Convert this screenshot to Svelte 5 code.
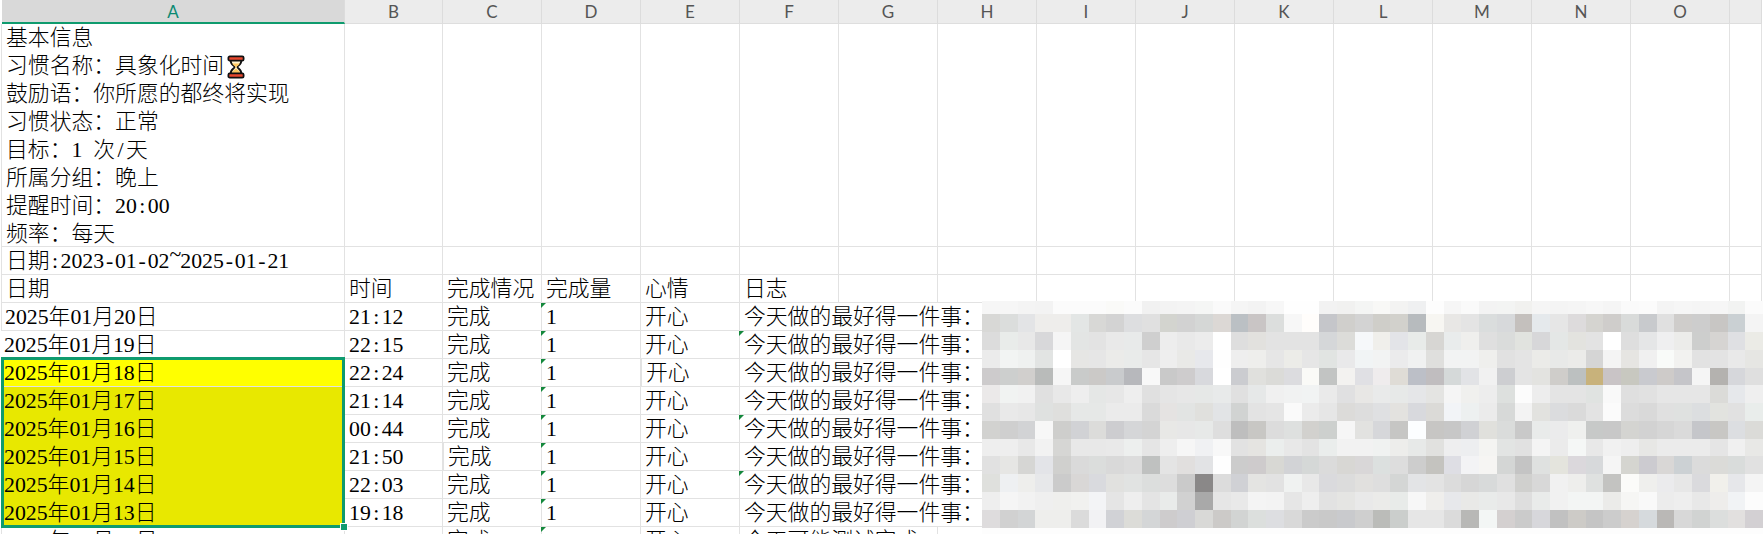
<script lang="ts">
  const cols = ["A", "B", "C", "D", "E", "F", "G", "H", "I", "J", "K", "L", "M", "N", "O", ""];
  const spare = cols.slice(1);

  const info = ["基本信息", "习惯名称：具象化时间", "鼓励语：你所愿的都终将实现", "习惯状态：正常", "目标：1 次/天", "所属分组：晚上", "提醒时间：20:00", "频率：每天"];

  const rows = [
    { date: "2025年01月20日", time: "21:12" },
    { date: "2025年01月19日", time: "22:15", note: true },
    { date: "2025年01月18日", time: "22:24", fill: "first" },
    { date: "2025年01月17日", time: "21:14", fill: "rest" },
    { date: "2025年01月16日", time: "00:44", fill: "rest", note: true },
    { date: "2025年01月15日", time: "21:50", fill: "rest" },
    { date: "2025年01月14日", time: "22:03", fill: "rest", note: true },
    { date: "2025年01月13日", time: "19:18", fill: "rest" }
  ];

  const heights = [13, 18, 18, 18, 17, 18, 18, 18, 17, 18, 18, 18, 18];

  // blurred part of the log column, one line per block row
  const blur = [
    "f6f6f6 f6f6f6 f4f4f4 f3f3f3 fbfbfb fbfbfb fbfbfb fafaf8 fbfbfb f1f1f1 f3f3f3 f4f4f4 f5f6f5 fafafa f5f5f5 f3f3f3 f7f7f7 fefefe fefefe f2f2f2 f1f1f0 f4f5f4 f8f8f6 f3f3f2 eff0f1 fdfdfd f6f6f6 fafafa f3f3f3 f3f4f3 f1f1ef f5f5f5 f4f4f4 f5f5f5 f7f7f7 f5f5f5 fafafa fbfbfb f4f4f4 f6f6f6 f5f5f5 f6f6f6 f2f3f2 fbfbfb",
    "d8d8d6 dbdddc e3e4e6 eeedeb eeedeb e3e6e5 d8d8d6 d3d3d3 dddee0 e0e0e0 d3d4cf d2d2d2 d5d7d6 dcd8d5 bbc0c4 c9c5c5 dcdedd f7f7f7 fffdfb c5c6ca d0cfcc d3d3d3 cfcec9 d2d1cc b7bbbe f7f6f2 e8e7e5 e4e4e4 dadddd d7d9db c4c0bd e5e9ec e6e6e6 dddbdc d5d4d0 cfcdcb d9dbda c8cacd e0e0e0 cfcdcb cdcdcd c8c6c4 cad0d3 f4f4f4",
    "dcdcdc e9ecea e8e8e8 d8d8da f5f5f5 e3e5e4 e3e3e3 e9e9e9 e8eaea cfcfcf ededed e9e9e9 ececec ffffff dedede e2e1de e3e3e3 e3e3e3 e3e3e3 d5d7d9 dcdcd9 f6f8fa f0efeb e3e4e8 e8ebe9 d7d6d3 e9ecec efefed dfdfdf dadcdb e1e3df d7d7d9 e4e7e6 e3e3df e3e3e3 ffffff dedede e5e6e7 efeff0 ececea cdcecd d6d4d2 dfe0e3 ebebe6",
    "ebebeb f2f4f3 eff1f0 e2e4e3 ffffff e6e6e4 e6e6e6 ebebe9 e9ebea e6e6e6 eeeeee e9e9e7 e7e8ec fefefe eeeeee eeeeec e6e6e6 ecece8 e6e6e6 e1e4e2 e9e9ea f1f4f5 f2f3f3 ebebec f0f1f1 dfdfdd f2f3f3 f2f3f3 efefed e1e1e1 e4e4e4 ebebe8 e8e9e8 ebebe9 d5d5d5 f4f4f4 e6e5e2 f0f0f0 f9fbf9 f2f2f0 e2e2e2 e3e3e3 e9e9e9 e6e6e3",
    "cdcbcc cdcfce d1cfcd b9bbba f6f6f6 c9cbca cbc9c7 c9cbcd b7b8bc f8f8f8 c9c9c9 cecccd d8d9dd ffffff cbccd0 e0e0dd dbdbd8 dcdcdf fafaf7 c2c4c3 f3f2f0 e0e0e4 efeced dfdcd6 bcbfc7 c0bdbf d5d9d9 e2e3e6 f1f1f1 cdced1 e4e4e4 e3e3e0 cfcdca bcc0c0 c8b27b c9c4c6 c8c8c0 c9cacf cecbc9 c5c5c9 f5f5f5 b4b2af d6d7db dfdfdf",
    "ebe9e9 f1f3f2 f1f1f1 e0e0e0 e8e8e8 eeeeee e5e7e6 e7e7e7 eeeeee e0e0e0 e5e5e5 e7e7e7 e6e8e7 e8eaea e0e0e0 e6e8e8 f0f0f0 f1f2f2 f1f3f3 eaeaea e0e0e1 e8e7e5 e9eaea e7e9e8 e5e6e8 e4e4e2 f5f5f5 f0f0ee ededed dde0de fcfcfc ededed e4e4e4 e4e4e4 e0e3e1 f9f9f9 dfdfdf e1e1e1 e6e6e6 e6e6e6 e6e6e6 dbdbd8 e6e8eb efefef",
    "e0e0e0 e9e9e9 e7e7e7 dfe1e0 dfdfdd e6e8e7 e6e8e7 ebebeb ebebeb dadada e5e3e2 e2e4e3 e0e0dd e2e4e6 d1d3d2 e3e3e3 e5e5e5 fafafa ebebeb e6e6e6 dcdbd9 dddddd dfe0e2 e3e2df d8d9dd dbdad7 f2f4f7 edf0f0 ebebeb d7d9d8 f3f3f3 e2e2df dbdcde dadada e3e3e3 fbfbfb dcdcdc d9d9d9 e0e0e0 dfe1e0 dcdee0 e2e3df e1e1e1 e9edeb",
    "d2d2d0 cfcfcf d2d3d5 f7f7f7 cececc d1d2d5 dcdcda cdcdd0 d5d6d8 d4d4d4 e8e8e6 e7e7e7 e7e9e8 dedede bebebe c8c7c4 dcdcdc dee0df d2d1ce cdd0ce f6f6f6 e2e2e0 d6d7da c6c6c4 fcfeff c7c6c4 c7c7c7 d0d1d4 e0e0dc dadcdb c9c9c9 e9ebea ebebec eff0ee c7c9c8 c8c8c8 d4d4d1 d2d2d2 d6d6d6 dadada c5c6ca c8c7c4 dcdee1 dbdbd8",
    "eeeeee eeeeee e8e8e8 f2f2f2 d6d6d4 e8e8e8 e8e8e8 e9e9e9 edefee e5e5e5 eeeeee f6f6f6 f0f1f3 f8f8f8 e2e2e2 e5e4e1 ebeeed e8e8e8 e3e3e3 eaedec f2f2f2 f2f2f2 f0f2f1 ededeb e7e9e8 e1e1df eeeeef edeef0 f4f4f2 e2e4e3 e1e1e1 f4f4f4 ebebeb f5f7f6 e8e8e8 f1f1f1 eeeeee e7e7e5 ebebeb ebebeb ebebeb e5e5e5 f0f0f0 e8e8e6",
    "e1e1e1 e6e6e4 d6d6d4 e3e4e8 d0d0ce dadada dbdddc d9d9d9 dcdcdc bfc1c0 e4e4e4 e1dfde e2e3e5 fefefe cccccc cecbcc d8d8d4 d2d3d6 d5d8d7 dbdbdb d8d7d4 d9d7d8 dce0df dddddd cdcdcd c4c3bf dedee4 f3f3f5 f6f5f3 d4d6d5 c4c4c4 dfe1e0 e4e4dd dbd8dc d7d9db f5f5f5 d5d5d0 cccbd0 d9d7d6 ccd1d4 dbdbdb dbdbd8 d9dcdb e1e1e1",
    "dfe0dd eef0f2 eeeeec e7e8ea cbcbcb d9d7d6 d9dade e1e1df e1e3e2 dcdedd dddddd cacaca 8a8888 dcdcdc d0d1d5 e4e4e2 e2e2e2 f0f2f1 e8e8e8 dadadd dcdcdc e1e0de dedede d4d6d5 e3e4e6 e3e3e3 dcdcdc d6d6d6 d8dada e0e0e0 d0d0ce d8d8d8 f1f1f1 eeeeec dfe1e0 c3c3c1 fbfbf9 efefed ebebed e7e7e7 dadadd f1f0eb e6e7ea f4f4f4",
    "eeeeee f5f5f5 f2f2f2 efefef efefed f1f1ef f3f4f6 e5e5e5 eeeeee e4e4e4 e9ebea d1d1d1 a9a9a9 e6e6e6 e9e9e9 f4f4f4 f3f3f3 e6e6e6 eeeeee e2e2e2 e5e5e3 e9e9e9 ebebe9 e8ebe9 f7f7f7 efeeec e7e8eb e9e9e7 e9ebea e8e8e8 dedede e9ebea f1f1f1 f3f5f4 f3f5f4 ebebe9 f6f6f4 f9f9f9 ececec eeeeee e8e8e8 eeedeb f1f3f5 fcfcfc",
    "dedcdd d1d1d1 d3d5d6 eeeeec eeeeec dbdbdb f2f2f4 d1d2d6 dcdcd8 d4d6d7 cecccd cfcfd3 d9d9d7 cccac8 d2d4d3 dcdfdd dddee1 d9d9d9 cbcbcb c9c9c9 c9cacd cfcfcf bbbcb9 cbcecc e6e6e6 e6e6e6 dbdbdb b8b8b6 f3f6f5 d4d0d0 cbcbcb d7d7db c1c1c1 cdcbc7 c5c5c5 cccccc d6d2cf d6dadd bab8b6 d8d8d8 d1d3d2 dcdedd e2e0df d3d0d3"
  ].map((line) => line.split(" "));

  const rowsCss = heights.map((h) => h + "px").join(" ");
  const isAscii = (ch) => ch.charCodeAt(0) < 128;
</script>

<!-- latin characters sit on half-width cells, like the sheet's CJK font -->
{#snippet txt(s)}
  {#each Array.from(s) as ch}
    {#if isAscii(ch)}<span class="half" class:tilde={ch === "~"}>{ch}</span>{:else}{ch}{/if}
  {/each}
{/snippet}

<div class="sheet">
  <div class="grid">
    {#each cols as c, i}
      <div class="head" class:active={i === 0}>{c}</div>
    {/each}

    <div class="cell info">
      {#each info as line, i}
        <div>
          {@render txt(line)}{#if i === 1}<svg class="hourglass" viewBox="0 0 18 24" width="18" height="24" aria-hidden="true">
              <path d="M3.5 5C3.5 10 7.6 10.5 7.6 12C7.6 13.5 3.5 14 3.5 19H14.5C14.5 14 10.4 13.5 10.4 12C10.4 10.5 14.5 10 14.5 5Z" fill="#fff3cf" stroke="#111" stroke-width="1.8" />
              <path d="M5.2 8.5C6 10.5 8.6 11 8.6 12.6H9.4C9.4 11 12 10.5 12.8 8.5Z" fill="#fdc860" />
              <path d="M4.8 18C5.3 15.5 8.4 14.5 9 13.4C9.6 14.5 12.7 15.5 13.2 18Z" fill="#fdc860" />
              <rect x="1.4" y="1.4" width="15.2" height="4.2" rx="1.4" fill="#e8482e" stroke="#111" stroke-width="1.8" />
              <rect x="1.4" y="18.4" width="15.2" height="4.2" rx="1.4" fill="#e8482e" stroke="#111" stroke-width="1.8" />
            </svg>{/if}
        </div>
      {/each}
    </div>
    {#each spare as c}<div class="cell"></div>{/each}

    <div class="cell">{@render txt("日期:2023-01-02~2025-01-21")}</div>
    {#each spare as c}<div class="cell"></div>{/each}

    <div class="cell">日期</div>
    <div class="cell">时间</div>
    <div class="cell">完成情况</div>
    <div class="cell">完成量</div>
    <div class="cell">心情</div>
    <div class="cell">日志</div>
    {#each cols.slice(6) as c}<div class="cell"></div>{/each}

    {#each rows as r}
      <div class="cell date" class:first={r.fill === "first"} class:rest={r.fill === "rest"}>{@render txt(r.date)}</div>
      <div class="cell">{@render txt(r.time)}</div>
      <div class="cell">完成</div>
      <div class="cell note">1</div>
      <div class="cell">开心</div>
      <div class="cell log" class:note={r.note}>今天做的最好得一件事：</div>
    {/each}

    <div class="cell date">{@render txt("2025年01月12日")}</div>
    <div class="cell">{@render txt("21:30")}</div>
    <div class="cell">完成</div>
    <div class="cell note">1</div>
    <div class="cell">开心</div>
    <div class="cell span2">今天可能测试完成</div>
    {#each cols.slice(7) as c}<div class="cell"></div>{/each}
  </div>

  <div class="blur" style="grid-template-rows: {rowsCss} 6px">
    {#each blur as line}
      {#each line as color}
        <div style="background: #{color}"></div>
      {/each}
    {/each}
  </div>

  <div class="selection"><span class="handle"></span></div>
</div>

<style>
  :global(body) {
    background: #fff;
    overflow: hidden;
  }
  .sheet {
    position: relative;
    width: 1763px;
    height: 534px;
    overflow: hidden;
    background: #fff;
    font-family: "Liberation Serif", "Noto Sans CJK SC", serif;
    font-weight: 300;
    font-size: 21.8px;
    color: #000;
  }
  .grid {
    display: grid;
    width: 1762px;
    margin-left: 1px;
    grid-template-columns: 344px 98px repeat(13, 99px) 32px;
    grid-template-rows: 24px 223px repeat(20, 28px);
  }
  .head {
    display: flex;
    align-items: center;
    justify-content: center;
    box-sizing: border-box;
    background: #ececec;
    border-right: 1px solid #dcdcdc;
    border-bottom: 1px solid #dedede;
    font-family: Lato, sans-serif;
    font-weight: 400;
    font-size: 17px;
    color: #555;
  }
  .head.active {
    background: #d9d9d9;
    border-bottom: 2px solid #0f9b6e;
    color: #0b8a72;
    margin-left: 1px;
  }
  .cell {
    position: relative;
    box-sizing: border-box;
    padding: 2px 0 0 4px;
    line-height: 25px;
    white-space: nowrap;
    border-right: 1px solid #e2e2e2;
    border-bottom: 1px solid #e2e2e2;
  }
  .cell:nth-child(16n + 1) {
    border-left: 1px solid #e2e2e2;
  }
  .cell.info {
    padding-top: 0;
    line-height: 28px;
  }
  .half {
    display: inline-block;
    width: 0.5em;
    text-align: center;
  }
  .tilde {
    vertical-align: 0.3em;
    line-height: 0;
  }
  .hourglass {
    margin-left: 3px;
    vertical-align: -6px;
  }
  .date {
    padding-left: 3px;
  }
  .date.first {
    background: #ffff00;
  }
  .date.rest {
    background: #e8e800;
    border-bottom-color: #e8e800;
  }
  .log {
    grid-column: span 11;
  }
  .span2 {
    grid-column: span 2;
  }
  .note::before {
    content: "";
    position: absolute;
    left: -1px;
    top: 0;
    border-top: 5px solid #14883c;
    border-right: 5px solid transparent;
  }
  .blur {
    position: absolute;
    left: 982px;
    top: 301px;
    width: 781px;
    height: 233px;
    display: grid;
    grid-template-columns: repeat(44, 1fr);
    background: #fdfdfd;
  }
  .selection {
    position: absolute;
    left: 1px;
    top: 357px;
    width: 344px;
    height: 171px;
    box-sizing: border-box;
    border: 3px solid #0f9b6e;
  }
  .handle {
    position: absolute;
    right: -6px;
    bottom: -6px;
    width: 6px;
    height: 6px;
    background: #0f9b6e;
    border: 1px solid #fff;
  }
</style>
